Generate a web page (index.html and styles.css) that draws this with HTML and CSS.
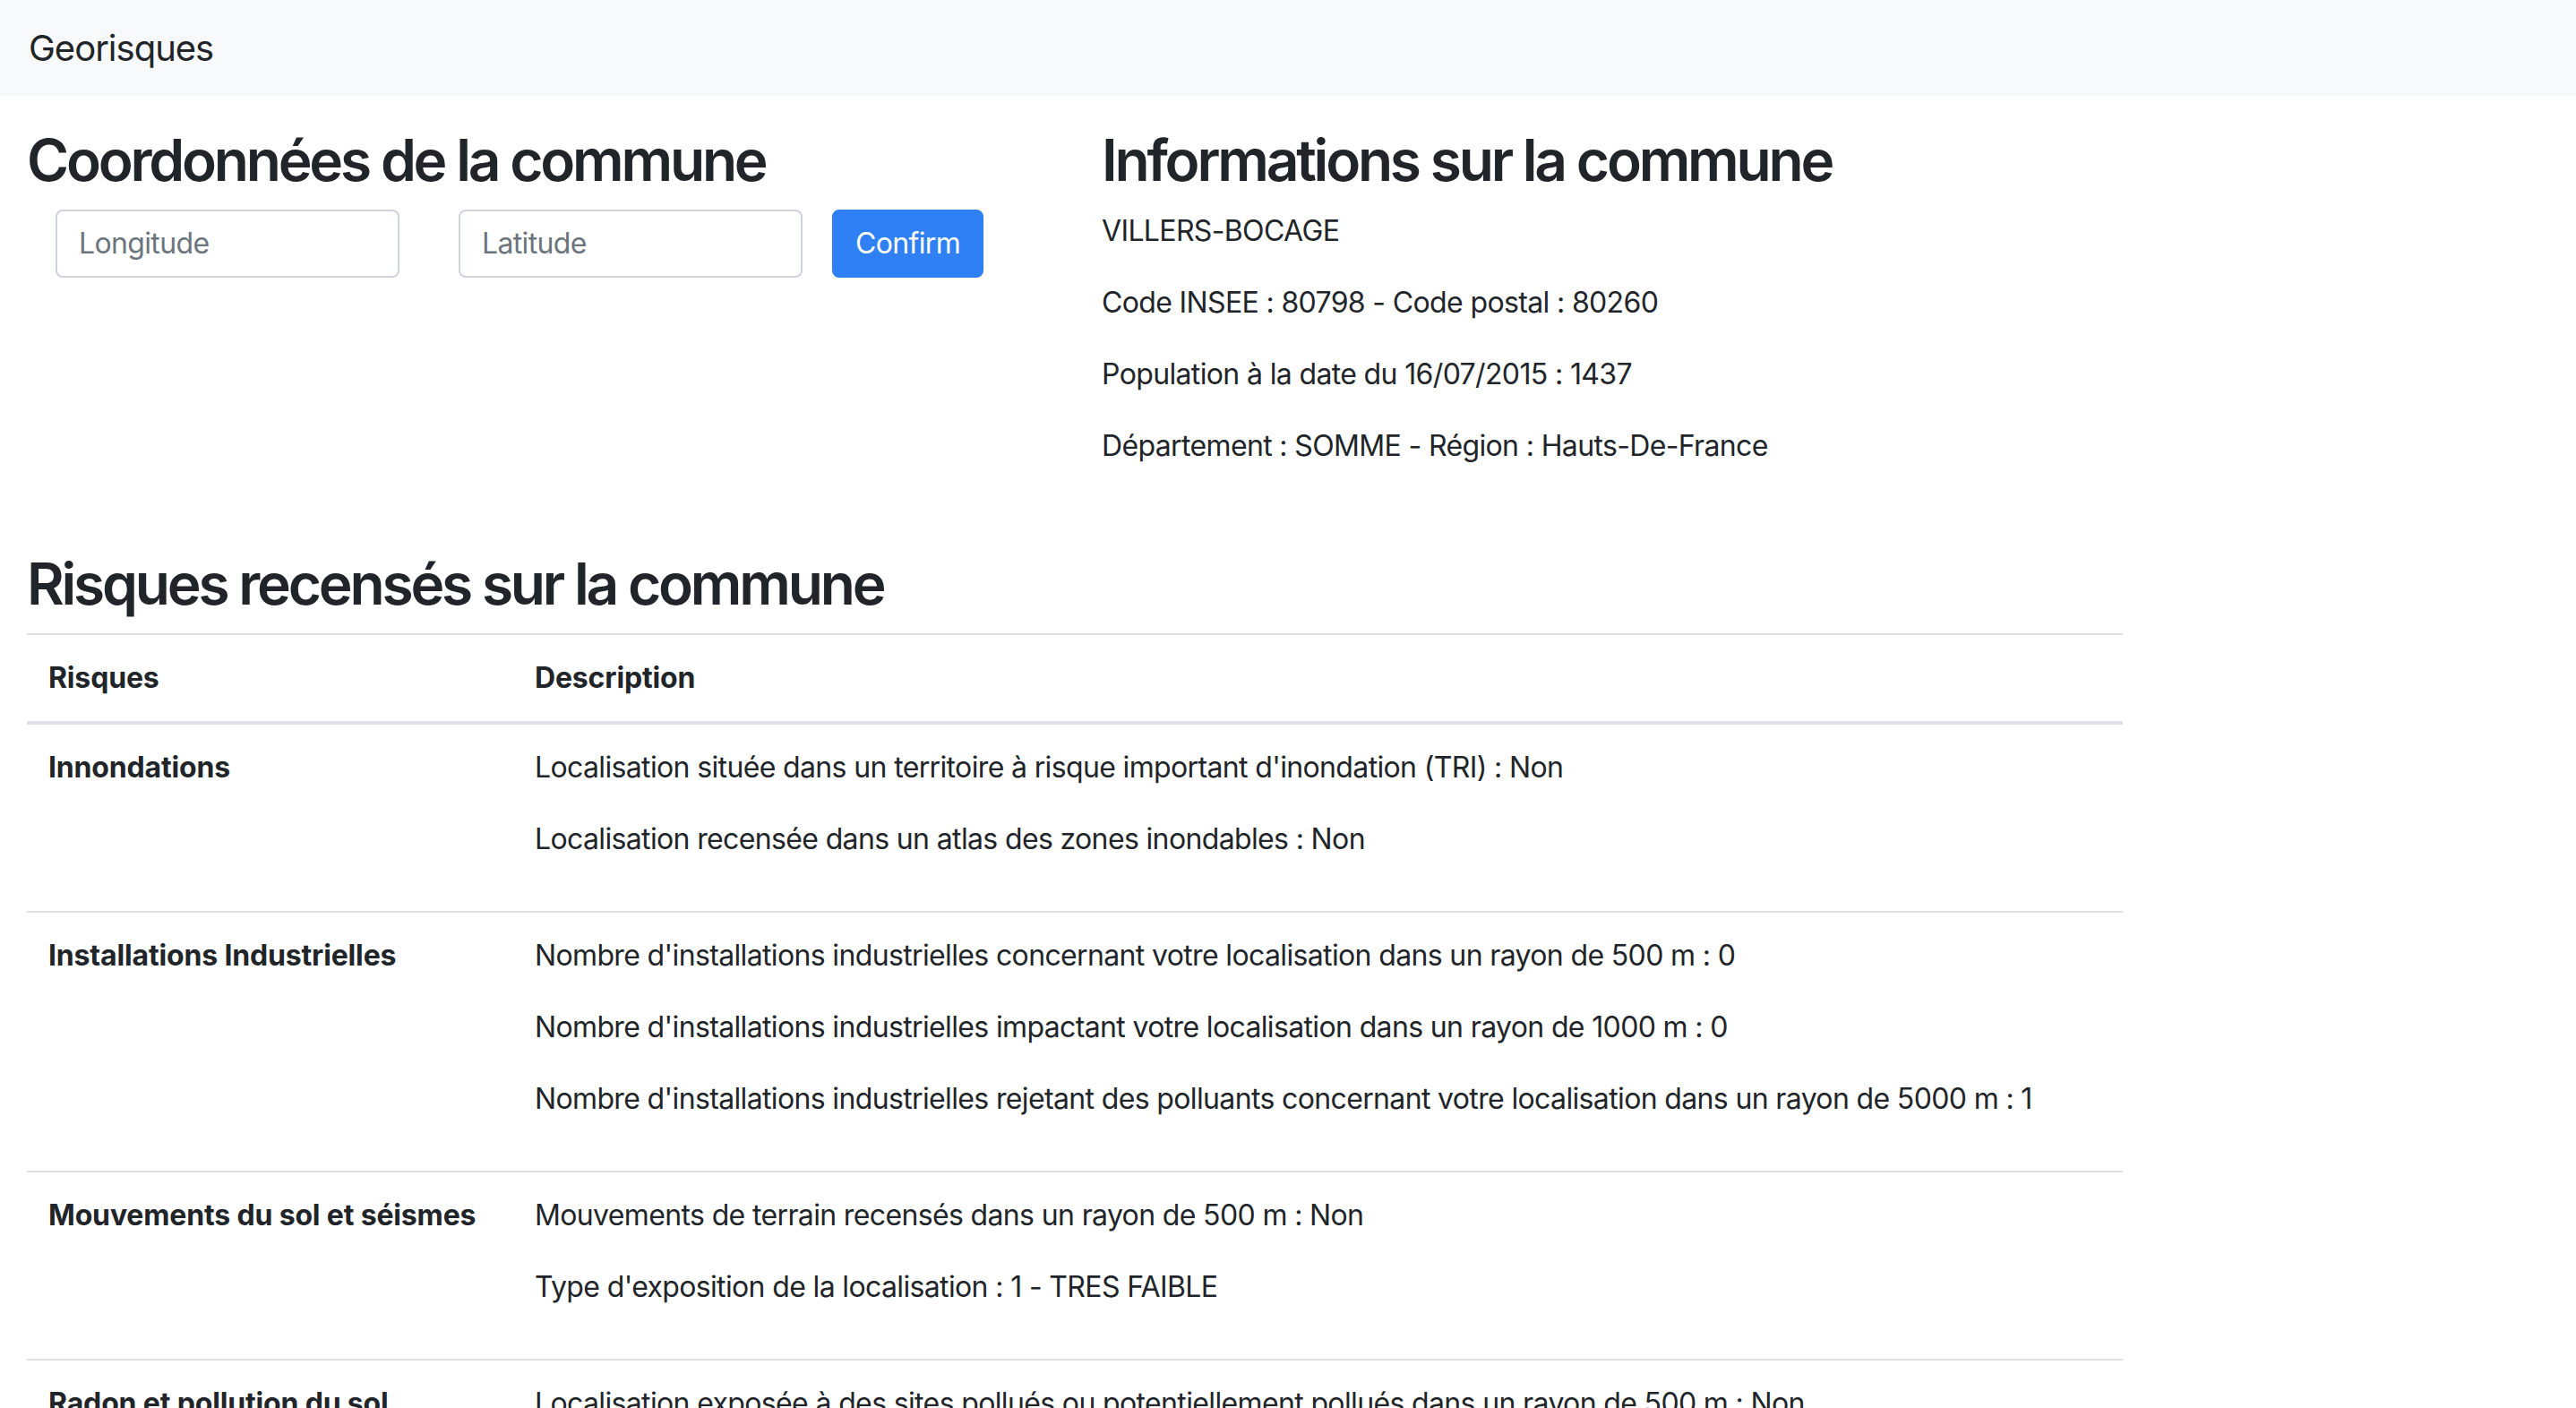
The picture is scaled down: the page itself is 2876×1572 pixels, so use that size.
FILE: index.html
```html
<!DOCTYPE html>
<html lang="fr">
<head>
<meta charset="utf-8">
<title>Georisques</title>
<link rel="stylesheet" href="styles.css">
</head>
<body>
<nav class="navbar"><span class="brand">Georisques</span></nav>
<main class="page">
  <div class="top-row">
    <section class="col-left">
      <h2 class="title">Coordonnées de la commune</h2>
      <form class="coords">
        <input class="field" type="text" placeholder="Longitude">
        <input class="field field-lat" type="text" placeholder="Latitude">
        <button class="btn" type="button">Confirm</button>
      </form>
    </section>
    <section class="col-right">
      <h2 class="title">Informations sur la commune</h2>
      <p>VILLERS-BOCAGE</p>
      <p>Code INSEE : 80798 - Code postal : 80260</p>
      <p>Population à la date du 16/07/2015 : 1437</p>
      <p>Département : SOMME - Région : Hauts-De-France</p>
    </section>
  </div>
  <section class="risks">
    <h2 class="title">Risques recensés sur la commune</h2>
    <table class="table">
      <thead>
        <tr><th class="c1">Risques</th><th>Description</th></tr>
      </thead>
      <tbody>
        <tr>
          <th class="c1">Innondations</th>
          <td>
            <p>Localisation située dans un territoire à risque important d'inondation (TRI) : Non</p>
            <p>Localisation recensée dans un atlas des zones inondables : Non</p>
          </td>
        </tr>
        <tr>
          <th class="c1">Installations Industrielles</th>
          <td>
            <p>Nombre d'installations industrielles concernant votre localisation dans un rayon de 500 m : 0</p>
            <p>Nombre d'installations industrielles impactant votre localisation dans un rayon de 1000 m : 0</p>
            <p>Nombre d'installations industrielles rejetant des polluants concernant votre localisation dans un rayon de 5000 m : 1</p>
          </td>
        </tr>
        <tr>
          <th class="c1">Mouvements du sol et séismes</th>
          <td>
            <p>Mouvements de terrain recensés dans un rayon de 500 m : Non</p>
            <p>Type d'exposition de la localisation : 1 - TRES FAIBLE</p>
          </td>
        </tr>
        <tr>
          <th class="c1">Radon et pollution du sol</th>
          <td>
            <p>Localisation exposée à des sites pollués ou potentiellement pollués dans un rayon de 500 m : Non</p>
            <p>Potentiel radon : Faible</p>
          </td>
        </tr>
      </tbody>
    </table>
  </section>
</main>
</body>
</html>
```

FILE: styles.css
```css
* { box-sizing: border-box; }
html, body { margin: 0; padding: 0; }
body {
  font-family: Inter, "Liberation Sans", sans-serif;
  font-size: 32px;
  line-height: 1.5;
  letter-spacing: -0.02em;
  color: #212529;
  background: #fff;
}
.navbar {
  background: #f8f9fa;
  height: 107px;
  padding: 0 32px;
  display: flex;
  align-items: center;
}
.brand { font-size: 40px; line-height: 60px; letter-spacing: -0.025em; }
.page { padding: 34px 30px 0; }
.top-row { display: flex; }
.col-left { width: 1200px; flex: none; }
.col-right { flex: 1; }
.title {
  font-size: 64px;
  font-weight: 600;
  line-height: 1.2;
  letter-spacing: -0.05em;
  margin: 0 0 16px;
}
p { margin: 0 0 32px; }
.coords { display: flex; align-items: center; margin: 0 0 0 32px; }
.field {
  width: 384px;
  height: 76px;
  padding: 12px 24px;
  font: inherit;
  letter-spacing: inherit;
  color: #495057;
  border: 2px solid #ced4da;
  border-radius: 8px;
  background: #fff;
}
.field::placeholder { color: #6c757d; opacity: 1; }
.field-lat { margin-left: 66px; }
.btn {
  margin-left: 33px;
  height: 76px;
  padding: 0 24px;
  font: inherit;
  letter-spacing: inherit;
  color: #fff;
  background: #2f7ff5;
  border: 2px solid #2f7ff5;
  border-radius: 8px;
}
.risks { margin-top: 60px; width: 2340px; }
.table { width: 100%; border-collapse: collapse; }
.table th, .table td {
  padding: 24px;
  text-align: left;
  vertical-align: top;
  border-top: 2px solid #dee2e6;
}
.table th { font-weight: 700; letter-spacing: -0.005em; }
.table thead th { border-bottom: 4px solid #dee2e6; }
.table td { font-weight: 400; }
.c1 { width: 543px; }
```
